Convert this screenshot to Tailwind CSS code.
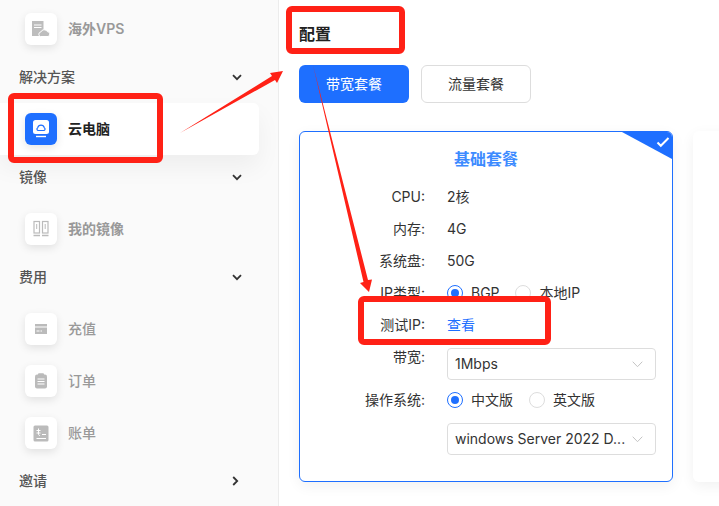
<!DOCTYPE html>
<html lang="zh">
<head>
<meta charset="UTF-8">
<title>配置</title>
<script src="https://cdn.jsdelivr.net/npm/@tailwindcss/browser@4"></script>
</head>
<body class="bg-white">
<div class="relative flex w-[719px] h-[506px] overflow-hidden bg-white text-sm text-[#333] font-['Inter','Noto_Sans_CJK_SC',sans-serif]">

  <!-- sidebar -->
  <aside class="w-[279px] h-full shrink-0 bg-[#fafafa] border-r border-[#ececec] pt-[3px] pr-[19px]">
    <div class="flex items-center h-[52px] pl-[25px] gap-[11px] text-[#999] font-semibold">
      <div class="w-8 h-8 rounded-md bg-white shadow-[0_3px_8px_rgba(0,0,0,0.1)] flex items-center justify-center">
        <svg width="18" height="18" viewBox="0 0 18 18"><rect x="0" y="1" width="11.500" height="15" fill="#bdbdbd"/><path d="M2 5h7.500M2 7.500h7.500" stroke="#fff" stroke-width="1"/><path d="M8.500 16.500a2.300 2.300 0 0 1 .3-4.500 3.600 3.600 0 0 1 6.500-.4 2.500 2.500 0 0 1 .7 4.900z" fill="#bdbdbd" stroke="#fff" stroke-width="1"/></svg>
      </div>
      <span>海外VPS</span>
    </div>

    <div class="flex items-center justify-between h-11 pl-[19px] pr-[17px] text-[#555] font-medium">
      <span>解决方案</span>
      <svg width="10" height="7" viewBox="0 0 10 7"><path d="M1 1.200l4 4 4-4" fill="none" stroke="#333" stroke-width="1.800"/></svg>
    </div>
    <div class="pt-1">
      <div class="flex items-center h-[52px] pl-[25px] gap-[11px] rounded-r-md bg-white shadow-[0_12px_24px_rgba(0,0,0,0.05)] text-[#222] font-semibold">
        <div class="w-8 h-8 rounded-md bg-[#1e6fff] shadow-[0_3px_8px_rgba(0,0,0,0.1)] flex items-center justify-center">
          <svg width="18" height="18" viewBox="0 0 18 18"><rect x="1" y="0" width="16" height="14" rx="2.500" fill="#fff"/><path d="M6.300 10.500a1.500 1.500 0 0 1-.6-2.800 3.400 3.400 0 0 1 6.600 0 1.500 1.500 0 0 1-.6 2.800z" fill="none" stroke="#1e6fff" stroke-width="1.200"/><path d="M4 16.500h10" stroke="#fff" stroke-width="1.400"/></svg>
        </div>
        <span>云电脑</span>
      </div>
    </div>

    <div class="flex items-center justify-between h-11 pl-[19px] pr-[17px] text-[#555] font-medium">
      <span>镜像</span>
      <svg width="10" height="7" viewBox="0 0 10 7"><path d="M1 1.200l4 4 4-4" fill="none" stroke="#333" stroke-width="1.800"/></svg>
    </div>
    <div class="pt-1">
      <div class="flex items-center h-[52px] pl-[25px] gap-[11px] text-[#999] font-semibold">
        <div class="w-8 h-8 rounded-md bg-white shadow-[0_3px_8px_rgba(0,0,0,0.1)] flex items-center justify-center">
          <svg width="18" height="18" viewBox="0 0 18 18" fill="none" stroke="#bbb"><rect x="2" y="1.500" width="5.500" height="11.500" stroke-width="1.200"/><rect x="10.500" y="1.500" width="5.500" height="11.500" stroke-width="1.200"/><path d="M4.700 4v5M13.200 4v5" stroke-width="1"/><path d="M1.500 15.500h6.500M10 15.500h6.500" stroke-width="1.600"/></svg>
        </div>
        <span>我的镜像</span>
      </div>
    </div>

    <div class="flex items-center justify-between h-11 pl-[19px] pr-[17px] text-[#555] font-medium">
      <span>费用</span>
      <svg width="10" height="7" viewBox="0 0 10 7"><path d="M1 1.200l4 4 4-4" fill="none" stroke="#333" stroke-width="1.800"/></svg>
    </div>
    <div class="pt-1">
      <div class="flex items-center h-[52px] pl-[25px] gap-[11px] text-[#999] font-medium">
        <div class="w-8 h-8 rounded-md bg-white shadow-[0_3px_8px_rgba(0,0,0,0.1)] flex items-center justify-center">
          <svg width="14" height="12" viewBox="0 0 14 12"><rect x="1" y="1" width="12" height="10" fill="#bbb"/><path d="M1 4h12" stroke="#fff" stroke-width="1"/><path d="M2.500 8h3M6.500 8h1.500" stroke="#fff" stroke-width="1"/></svg>
        </div>
        <span>充值</span>
      </div>
      <div class="flex items-center h-[52px] pl-[25px] gap-[11px] text-[#999] font-medium">
        <div class="w-8 h-8 rounded-md bg-white shadow-[0_3px_8px_rgba(0,0,0,0.1)] flex items-center justify-center">
          <svg width="14" height="16" viewBox="0 0 14 16"><rect x="1" y="1.500" width="12" height="14" rx="2" fill="#bbb"/><rect x="4" y="0.300" width="6" height="2.500" rx="1" fill="#bbb"/><path d="M3.500 6h7M3.500 8.500h7M3.500 11h7" stroke="#fff" stroke-width="1"/></svg>
        </div>
        <span>订单</span>
      </div>
      <div class="flex items-center h-[52px] pl-[25px] gap-[11px] text-[#999] font-medium">
        <div class="w-8 h-8 rounded-md bg-white shadow-[0_3px_8px_rgba(0,0,0,0.1)] flex items-center justify-center">
          <svg width="16" height="17" viewBox="0 0 16 17"><rect x="0.500" y="0.500" width="15" height="16" rx="1.500" fill="#bbb"/><path d="M3.500 5.500h4M3.500 8h4M5.500 3.500v5.500c0 1 .5 1.500 1.500 1.500M9 9.500h4M3.500 13.500h9.500" stroke="#fff" stroke-width="1" fill="none"/></svg>
        </div>
        <span>账单</span>
      </div>
    </div>

    <div class="flex items-center justify-between h-11 pl-[19px] pr-[20px] text-[#555] font-medium">
      <span>邀请</span>
      <svg width="7" height="10" viewBox="0 0 7 10"><path d="M1.200 1l4 4-4 4" fill="none" stroke="#333" stroke-width="1.800"/></svg>
    </div>
  </aside>

  <!-- main -->
  <main class="flex-1 min-w-0 pl-5">
    <h1 class="h-[65px] pt-[23px] text-base leading-[22px] font-bold text-[#222]">配置</h1>
    <div class="flex gap-3">
      <button class="w-[110px] h-[38px] rounded-md bg-[#1e6fff] text-white">带宽套餐</button>
      <button class="w-[110px] h-[38px] rounded-md bg-white border border-[#ddd] text-[#333]">流量套餐</button>
    </div>

    <div class="flex gap-5 mt-7 w-[500px]">
      <section class="relative w-[374px] h-[351px] shrink-0 rounded-md border border-[#1e6fff] bg-white shadow-[0_4px_14px_rgba(0,0,0,0.06)] overflow-hidden">
        <svg class="absolute top-0 right-0" width="50" height="27" viewBox="0 0 50 27"><path d="M0 0h50v27z" fill="#1e6fff"/><path d="M35.500 10.500l3.300 3.300L46.500 6" fill="none" stroke="#fff" stroke-width="2"/></svg>
        <h2 class="h-[49px] pt-[16px] text-center text-base leading-[22px] font-semibold text-[#3d8bff]">基础套餐</h2>

        <div class="flex items-center h-8"><span class="w-[125px] text-right">CPU:</span><span class="ml-[22px]">2核</span></div>
        <div class="flex items-center h-8"><span class="w-[125px] text-right">内存:</span><span class="ml-[22px]">4G</span></div>
        <div class="flex items-center h-8"><span class="w-[125px] text-right">系统盘:</span><span class="ml-[22px]">50G</span></div>
        <div class="flex items-center h-8">
          <span class="w-[125px] text-right">IP类型:</span>
          <span class="ml-[22px] w-4 h-4 rounded-full border border-[#1e6fff] flex items-center justify-center"><span class="w-2 h-2 rounded-full bg-[#1e6fff]"></span></span>
          <span class="ml-2">BGP</span>
          <span class="ml-[15px] w-4 h-4 rounded-full border border-[#ddd]"></span>
          <span class="ml-[9px]">本地IP</span>
        </div>
        <div class="flex items-center h-8"><span class="w-[125px] text-right">测试IP:</span><span class="ml-[22px] text-[#1e6fff]">查看</span></div>

        <div class="flex items-start h-8 mt-[7px]">
          <span class="w-[125px] text-right leading-[18px]">带宽:</span>
          <div class="ml-[22px] w-[209px] h-8 flex items-center justify-between pl-[7px] pr-[12px] rounded border border-[#ddd]">
            <span>1Mbps</span>
            <svg width="11" height="7" viewBox="0 0 11 7"><path d="M.7.7l4.800 5 4.800-5" fill="none" stroke="#c4c4c4"/></svg>
          </div>
        </div>
        <div class="flex items-center h-8 mt-1">
          <span class="w-[125px] text-right">操作系统:</span>
          <span class="ml-[22px] w-4 h-4 rounded-full border border-[#1e6fff] flex items-center justify-center"><span class="w-2 h-2 rounded-full bg-[#1e6fff]"></span></span>
          <span class="ml-2">中文版</span>
          <span class="ml-4 w-4 h-4 rounded-full border border-[#ddd]"></span>
          <span class="ml-2">英文版</span>
        </div>
        <div class="flex mt-[7px]">
          <div class="ml-[147px] w-[209px] h-8 flex items-center justify-between pl-[7px] pr-[12px] rounded border border-[#ddd]">
            <span class="whitespace-nowrap">windows Server 2022 D...</span>
            <svg class="shrink-0" width="11" height="7" viewBox="0 0 11 7"><path d="M.7.7l4.800 5 4.800-5" fill="none" stroke="#c4c4c4"/></svg>
          </div>
        </div>
      </section>
      <section class="w-[200px] h-[351px] shrink-0 rounded-md bg-white shadow-[0_4px_14px_rgba(0,0,0,0.06)]"></section>
    </div>
  </main>

  <!-- annotations drawn over the screenshot -->
  <div class="absolute left-[8px] top-[93px] w-[155px] h-[70px] rounded-md border-[6px] border-[#ff2116]"></div>
  <div class="absolute left-[286px] top-[6px] w-[119px] h-[48px] rounded-md border-[6px] border-[#ff2116]"></div>
  <div class="absolute left-[358px] top-[296px] w-[193px] h-[49px] rounded-md border-[6px] border-[#ff2116]"></div>
  <svg class="absolute left-0 top-0" width="719" height="506" viewBox="0 0 719 506">
    <path d="M180 133L272 76L270 73L283 71L277 83L275 80Z" fill="#ff2116"/>
    <path d="M313 65L368 280L372 279.500L369 292L360 283L363.500 282Z" fill="#ff2116"/>
  </svg>
</div>
</body>
</html>
